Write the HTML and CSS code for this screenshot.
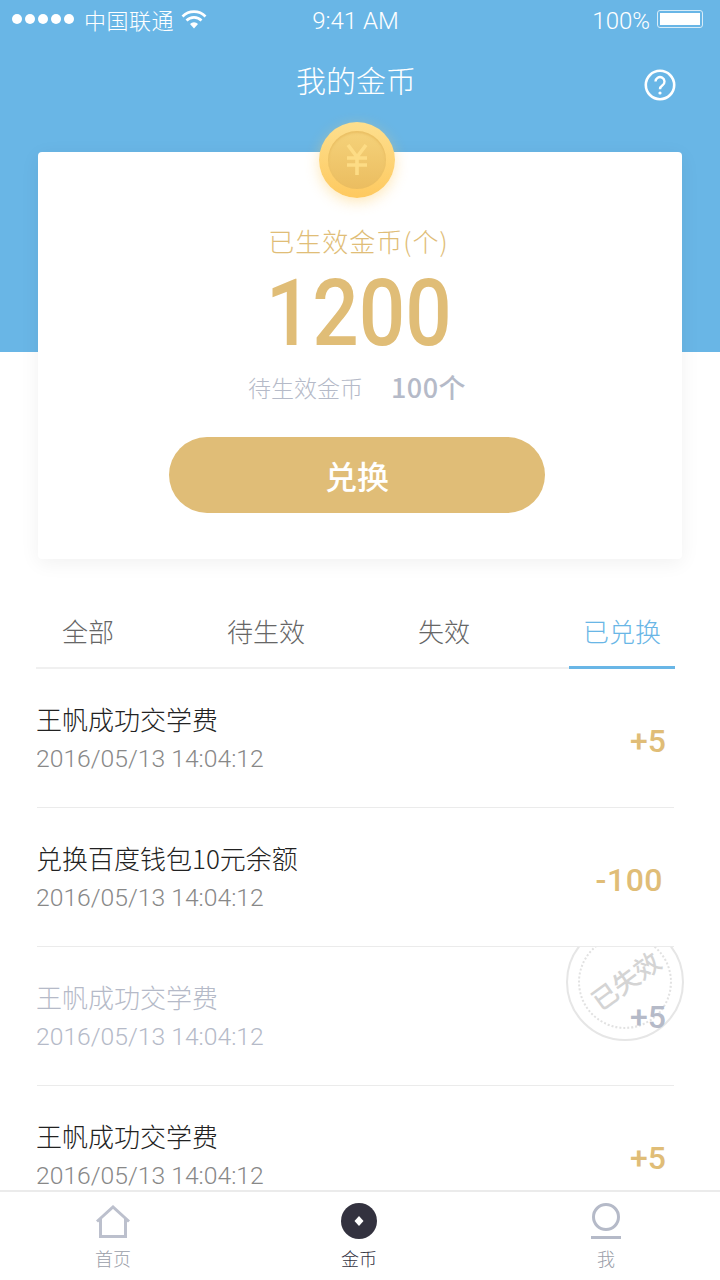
FILE: index.html
```html
<!DOCTYPE html>
<html lang="zh-CN">
<head>
    <meta charset="UTF-8">
    <meta name="viewport" content="width=device-width, initial-scale=1.0">
    <title>我的金币</title>
    <link rel="stylesheet" href="styles.css">
</head>
<body>
    <div class="page">
        <div class="status-bar">
            <div class="status-left">
                <span class="signal"><i></i><i></i><i></i><i></i><i></i></span>
                <span class="carrier">中国联通</span>
                <svg class="wifi" width="26" height="20" viewBox="0 0 26 20">
                    <path d="M1.500 7.500a16 16 0 0 1 23 0M5.500 11.500a10.500 10.500 0 0 1 15 0" fill="none" stroke="#fff" stroke-width="2.600"/>
                    <path d="M9 15a5.600 5.600 0 0 1 8 0l-4 4.500z" fill="#fff"/>
                </svg>
            </div>
            <div class="status-time">9:41 AM</div>
            <div class="status-right">
                <span class="percent">100%</span>
                <span class="battery"><i></i></span>
            </div>
        </div>

        <div class="nav-bar">
            <h1>我的金币</h1>
            <svg class="help" width="32" height="32" viewBox="0 0 32 32">
                <circle cx="16" cy="16" r="14.200" fill="none" stroke="#fff" stroke-width="2.600"/>
                <path d="M11.500 12.600a4.500 4.500 0 1 1 7 3.700c-1.600 1.100-2.500 1.900-2.500 3.900" fill="none" stroke="#fff" stroke-width="2.400"/>
                <circle cx="16" cy="24" r="1.600" fill="#fff"/>
            </svg>
        </div>

        <div class="card">
            <div class="coin">
                <div class="coin-inner">
                    <svg width="24" height="32" viewBox="0 0 24 32">
                        <path d="M3 1l9 12 9-12M2 14h20M2 21h20M12 13v18" fill="none" stroke="#fddc85" stroke-width="3.600"/>
                    </svg>
                </div>
            </div>
            <div class="card-label">已生效金币(个)</div>
            <div class="card-amount"><span>1200</span></div>
            <div class="card-pending">
                <span>待生效金币</span>
                <strong>100个</strong>
            </div>
            <button class="exchange-btn">兑换</button>
        </div>

        <div class="tabs">
            <div class="tab">全部</div>
            <div class="tab">待生效</div>
            <div class="tab">失效</div>
            <div class="tab active">已兑换</div>
        </div>

        <div class="list">
            <div class="row">
                <div class="row-text">
                    <div class="row-title">王帆成功交学费</div>
                    <div class="row-date">2016/05/13 14:04:12</div>
                </div>
                <div class="row-value">+5</div>
            </div>
            <div class="row">
                <div class="row-text">
                    <div class="row-title">兑换百度钱包10元余额</div>
                    <div class="row-date">2016/05/13 14:04:12</div>
                </div>
                <div class="row-value minus">-100</div>
            </div>
            <div class="row expired">
                <div class="row-text">
                    <div class="row-title">王帆成功交学费</div>
                    <div class="row-date">2016/05/13 14:04:12</div>
                </div>
                <div class="stamp"><div class="stamp-ring"><span>已失效</span></div></div>
                <div class="row-value">+5</div>
            </div>
            <div class="row">
                <div class="row-text">
                    <div class="row-title">王帆成功交学费</div>
                    <div class="row-date">2016/05/13 14:04:12</div>
                </div>
                <div class="row-value">+5</div>
            </div>
        </div>

        <div class="tab-bar">
            <div class="tab-item">
                <svg width="36" height="34" viewBox="0 0 36 34">
                    <path d="M2 16.500L18 2l16 14.500M5.500 14v17.500h25V14" fill="none" stroke="#bcc0cd" stroke-width="3"/>
                </svg>
                <span>首页</span>
            </div>
            <div class="tab-item current">
                <svg width="36" height="36" viewBox="0 0 36 36">
                    <circle cx="18" cy="18" r="18" fill="#33323f"/>
                    <path d="M18 13l4.500 5-4.500 5-4.500-5z" fill="#fff"/>
                </svg>
                <span>金币</span>
            </div>
            <div class="tab-item">
                <svg width="32" height="36" viewBox="0 0 32 36">
                    <circle cx="16" cy="14" r="12.500" fill="none" stroke="#b5bac8" stroke-width="3"/>
                    <path d="M1 34.500h30" stroke="#b5bac8" stroke-width="3"/>
                </svg>
                <span>我</span>
            </div>
        </div>
    </div>
</body>
</html>
```

FILE: styles.css
```css
* {
    box-sizing: border-box;
}

body {
    margin: 0;
    font-family: "Noto Sans CJK SC", sans-serif;
    font-weight: 300;
    background-color: #ffffff;
}

.page {
    width: 720px;
    height: 1280px;
    overflow: hidden;
    display: flex;
    flex-direction: column;
    background: linear-gradient(#69b6e6 352px, #ffffff 352px);
}

.status-bar {
    height: 40px;
    padding: 0 17px 0 12px;
    display: flex;
    align-items: center;
    justify-content: space-between;
    color: #ffffff;
    font-size: 22px;
}

.status-left,
.status-right {
    width: 260px;
    display: flex;
    align-items: center;
}

.status-left {
    padding-bottom: 3px;
}

.status-right {
    justify-content: flex-end;
}

.status-time,
.percent {
    font-family: Roboto, sans-serif;
    font-size: 24px;
    font-weight: 300;
    padding-top: 2px;
}

.status-time {
    margin-right: 4px;
}

.carrier {
    letter-spacing: 0.5px;
}

.signal {
    display: flex;
    gap: 3px;
    margin-right: 10px;
}

.signal i {
    width: 10px;
    height: 10px;
    border-radius: 50%;
    background-color: #ffffff;
}

.wifi {
    margin-left: 7px;
}

.battery {
    width: 46px;
    height: 18px;
    margin-left: 7px;
    margin-bottom: 2px;
    padding: 2px;
    border: 1px solid #d8ecf8;
    border-radius: 3px;
}

.battery i {
    display: block;
    height: 100%;
    background-color: #ffffff;
}

.nav-bar {
    height: 82px;
    padding: 0 28px 0 0;
    display: flex;
    align-items: center;
    justify-content: flex-end;
    position: relative;
}

.nav-bar h1 {
    margin: 0;
    position: absolute;
    left: 0;
    right: 0;
    top: 0;
    text-align: center;
    font-size: 30px;
    font-weight: 300;
    line-height: 78px;
    color: #ffffff;
    padding-right: 8px;
}

.help {
    margin-top: 8px;
    margin-right: 16px;
}

.card {
    position: relative;
    margin: 30px 38px 0;
    height: 407px;
    padding-top: 69px;
    background-color: #ffffff;
    border-radius: 4px;
    box-shadow: 0 4px 20px rgba(0, 0, 0, 0.06);
    text-align: center;
}

.coin {
    position: absolute;
    top: -30px;
    left: 281px;
    width: 76px;
    height: 76px;
    border-radius: 50%;
    padding: 9px;
    background: linear-gradient(#fddf8e, #fec95f);
    box-shadow: 0 4px 14px rgba(253, 205, 100, 0.45);
}

.coin-inner {
    width: 58px;
    height: 58px;
    border-radius: 50%;
    display: flex;
    align-items: center;
    justify-content: center;
    background: linear-gradient(#f5d27a, #ebbd60);
    box-shadow: inset 0 2px 2px rgba(225, 175, 80, 0.5);
}

.card-label {
    font-size: 26px;
    line-height: 40px;
    letter-spacing: 1px;
    color: #e0bd77;
    padding-right: 3px;
}

.card-amount {
    font-family: Roboto, sans-serif;
    font-size: 93px;
    font-weight: 500;
    line-height: 105px;
    padding-right: 3px;
    color: #e0bd77;
}

.card-amount span {
    display: inline-block;
    transform: scaleX(0.88);
}

.card-pending {
    display: flex;
    justify-content: center;
    gap: 28px;
    margin: 1px 6px 0 0;
    font-size: 23px;
    line-height: 40px;
    color: #b5bac8;
}

.card-pending strong {
    font-size: 27px;
    font-weight: 500;
    letter-spacing: 0.5px;
}

.exchange-btn {
    display: block;
    width: 376px;
    height: 76px;
    margin: 30px 0 0 131px;
    border: none;
    border-radius: 38px;
    background-color: #e0bd77;
    color: #ffffff;
    font-family: inherit;
    font-size: 32px;
    font-weight: 500;
}

.tabs {
    margin: 51px 45px 0 36px;
    padding-left: 12px;
    height: 59px;
    display: flex;
    justify-content: space-between;
    border-bottom: 2px solid #f0f0f0;
}

.tab {
    height: 59px;
    padding: 0 14px;
    font-size: 26px;
    line-height: 42px;
    color: #666666;
}

.tab.active {
    color: #69b6e6;
    border-bottom: 3px solid #69b6e6;
}

.list {
    flex: 1;
    overflow: hidden;
    margin: 0 30px 0 37px;
}

.row {
    position: relative;
    height: 139px;
    margin-right: 16px;
    padding-right: 8px;
    display: flex;
    align-items: center;
    justify-content: space-between;
    clip-path: inset(0 -20px 0 0);
    border-bottom: 1px solid #ebebeb;
}

.row-text {
    margin-left: -1px;
    padding-top: 2px;
}

.row-title {
    font-size: 26px;
    line-height: 38px;
    margin-bottom: 2px;
    color: #222222;
}

.row-date {
    font-family: Roboto, sans-serif;
    font-size: 24.700px;
    font-weight: 300;
    line-height: 38px;
    color: #888888;
}

.row-value {
    position: relative;
    padding-top: 6px;
    font-family: Roboto, sans-serif;
    font-size: 32px;
    font-weight: 500;
    color: #e0bd77;
}

.row-value.minus {
    margin-right: 3px;
    letter-spacing: 0.5px;
}

.expired .row-title,
.expired .row-date {
    color: #b5bac8;
}

.expired .row-value {
    padding-top: 2px;
    color: #b5bac8;
}

.stamp {
    position: absolute;
    right: -10px;
    top: -24px;
    width: 118px;
    height: 118px;
    padding: 10px;
    border: 2px solid #e6e6e6;
    border-radius: 50%;
}

.stamp-ring {
    width: 94px;
    height: 94px;
    border: 2px dotted #e2e2e2;
    border-radius: 50%;
    display: flex;
    align-items: center;
    justify-content: center;
}

.stamp-ring span {
    margin-bottom: 5px;
    font-size: 26px;
    font-weight: 500;
    color: #d4d4d4;
    transform: rotate(-36deg);
    white-space: nowrap;
}

.tab-bar {
    height: 90px;
    flex-shrink: 0;
    display: grid;
    grid-template-columns: 226px 266px 228px;
    border-top: 2px solid #ebebeb;
    background-color: #ffffff;
}

.tab-item {
    display: flex;
    flex-direction: column;
    align-items: center;
    justify-content: flex-end;
    padding-bottom: 9px;
    font-size: 18px;
    line-height: 26px;
    color: #9a9ea9;
    gap: 6px;
}

.tab-item.current {
    color: #33323f;
}
```
